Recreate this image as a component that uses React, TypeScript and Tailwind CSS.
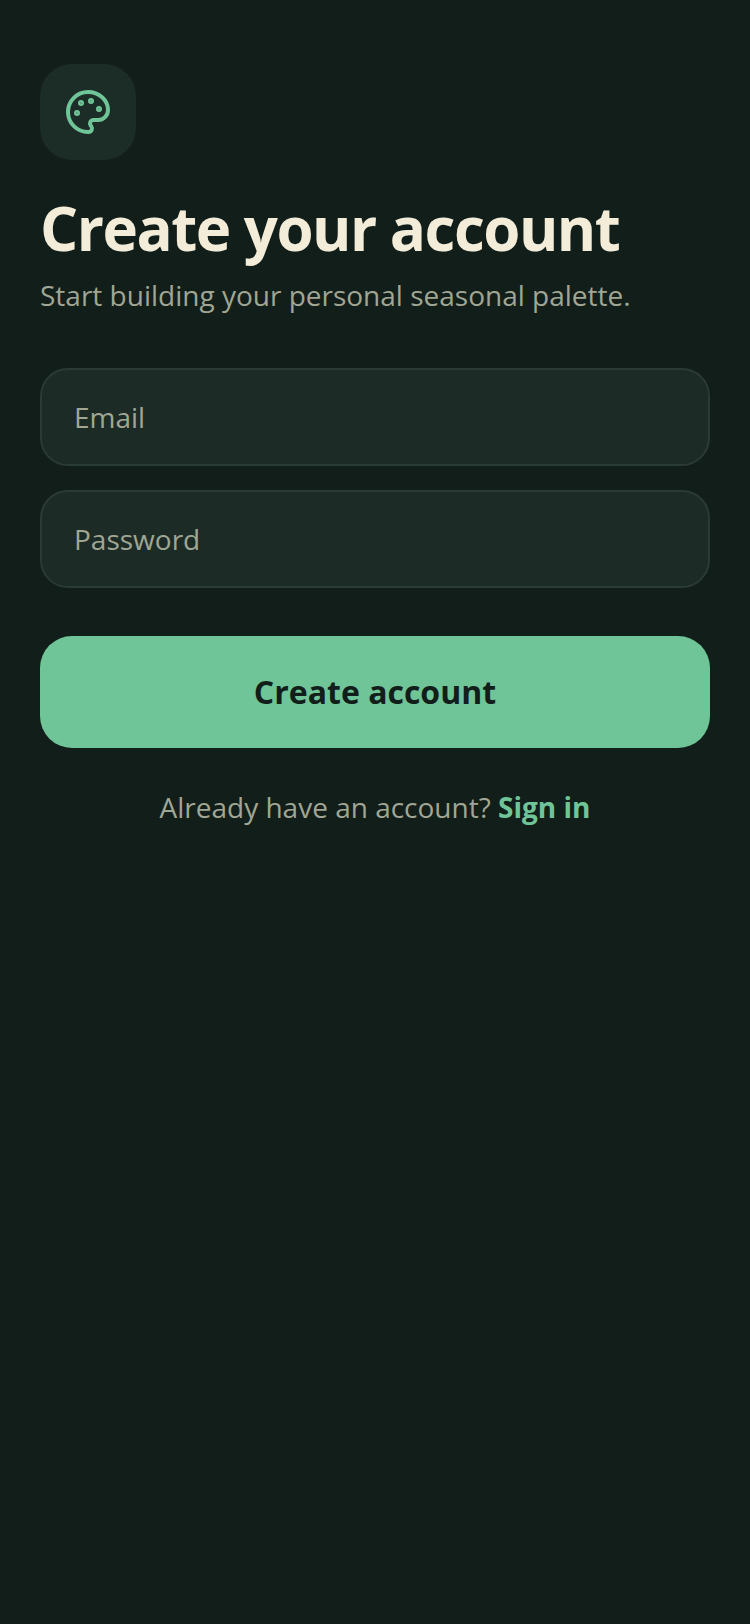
import { Palette } from 'lucide-react'

export default function App() {
  return (
    <div className="min-h-[1624px] bg-[#121e1a] px-10 pt-16 font-['Open_Sans',sans-serif]">
      <div className="w-24 h-24 rounded-[32px] bg-[#1c2c26] flex items-center justify-center">
        <Palette className="w-12 h-12 text-[#6fc598]" strokeWidth={2} />
      </div>

      <h1 className="mt-8 text-[60px] leading-[72px] font-bold tracking-[-1.5px] text-[#f2ecd9]">
        Create your account
      </h1>
      <p className="mt-[11px] text-[28px] leading-[40px] text-[#a0a693]">
        Start building your personal seasonal palette.
      </p>

      <div className="mt-[53px] flex flex-col gap-6">
        <input
          type="email"
          placeholder="Email"
          className="h-[98px] w-full px-8 rounded-[28px] bg-[#1d2b26] border-2 border-[#2a3a34] text-[28px] text-[#f2ecd9] placeholder:text-[#a0a693] outline-none"
        />
        <input
          type="password"
          placeholder="Password"
          className="h-[98px] w-full px-8 rounded-[28px] bg-[#1d2b26] border-2 border-[#2a3a34] text-[28px] text-[#f2ecd9] placeholder:text-[#a0a693] outline-none"
        />
      </div>

      <button className="mt-12 w-full h-28 rounded-[32px] bg-[#6fc598] text-[32px] font-bold text-[#121e1a]">
        Create account
      </button>

      <p className="mt-[39px] text-center text-[28px] leading-[40px] text-[#a0a693]">
        Already have an account? <span className="font-bold text-[#6fc598]">Sign in</span>
      </p>
    </div>
  )
}
